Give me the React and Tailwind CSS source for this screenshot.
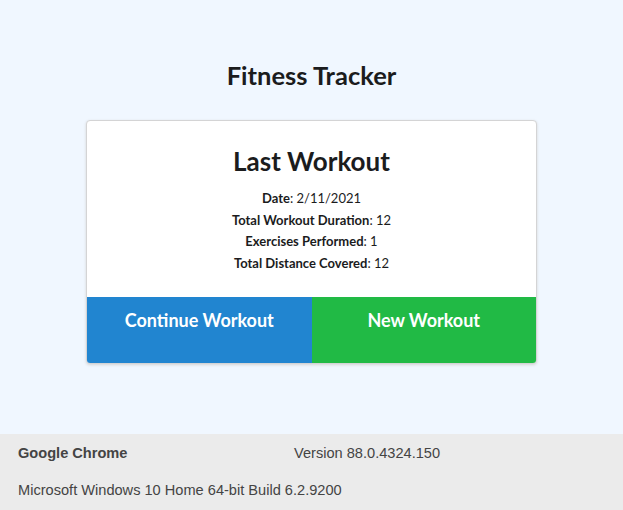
export default function App() {
  const rows = [
    ["Date", "2/11/2021"],
    ["Total Workout Duration", "12"],
    ["Exercises Performed", "1"],
    ["Total Distance Covered", "12"],
  ];
  return (
    <div className="w-[623px] h-[510px] flex flex-col bg-[#f0f7ff]" style={{ fontFamily: "Lato, 'Noto Sans', sans-serif" }}>
      <div className="flex-1 flex flex-col items-center">
        <h1 className="mt-[59px] text-[25.5px] leading-[32px] font-bold text-[#1b1c1d]">Fitness Tracker</h1>
        <div className="mt-[29px] w-[451px] bg-white rounded-[4px] border border-[#d4d4d5] shadow-[0_1px_3px_0_#d4d4d5] overflow-hidden">
          <div className="pt-[24px] pb-[23px] flex flex-col items-center text-[#1b1c1d]">
            <h2 className="text-[26px] leading-[32px] font-bold mb-[11px]">Last Workout</h2>
            {rows.map(([k, v]) => (
              <p key={k} className="text-[13px] leading-[21.5px]">
                <span className="font-bold">{k}</span>: {v}
              </p>
            ))}
          </div>
          <div className="flex h-[66px]">
            <div className="flex-1 bg-[#2185d0] text-white text-[18px] font-bold text-center pt-[10px]">Continue Workout</div>
            <div className="flex-1 bg-[#21ba45] text-white text-[18px] font-bold text-center pt-[10px]">New Workout</div>
          </div>
        </div>
      </div>
      <div className="h-[76px] bg-[#ebebeb] text-[#444] text-[14.6px] px-[18px] pt-[9px]" style={{ fontFamily: "'Liberation Sans', Arial, sans-serif" }}>
        <div className="flex">
          <span className="font-bold w-[276px]">Google Chrome</span>
          <span>Version 88.0.4324.150</span>
        </div>
        <div className="mt-[15px]">Microsoft Windows 10 Home 64-bit Build 6.2.9200</div>
      </div>
    </div>
  );
}
